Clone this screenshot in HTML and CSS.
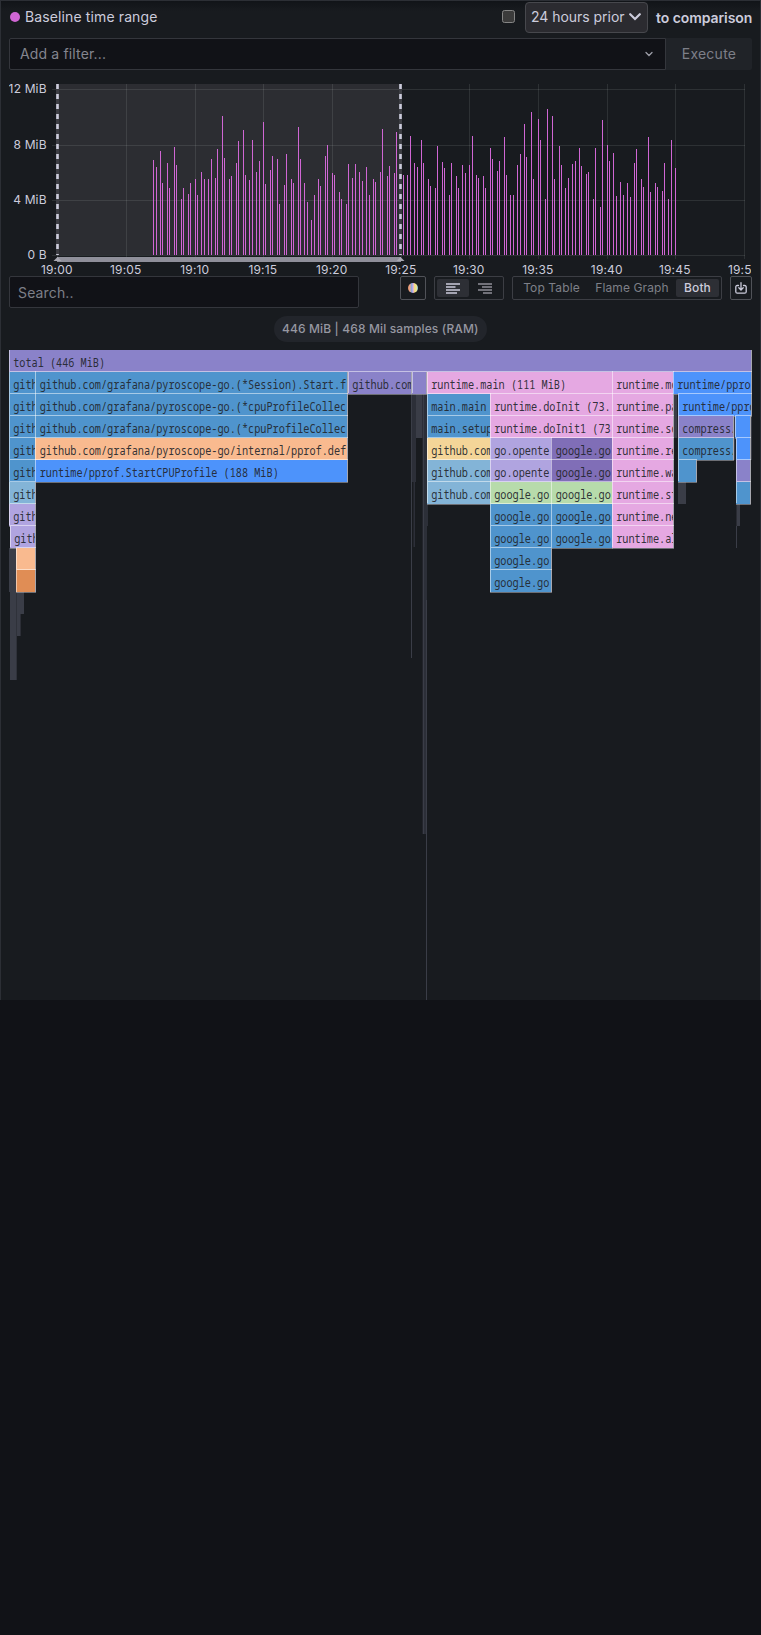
FILE: index.html
```html
<!DOCTYPE html>
<html lang="en">
<head>
<meta charset="utf-8">
<title>Comparison view</title>
<link rel="stylesheet" href="styles.css">
</head>
<body>
<section class="panel">
  <header class="panel-header">
    <span class="dot"></span>
    <span class="title">Baseline time range</span>
    <span class="checkbox"></span>
    <span class="select"><span class="select-label">24 hours prior</span>
      <svg width="12" height="8" viewBox="0 0 12 8"><path d="M1.2 1.2 6 6l4.800-4.800" fill="none" stroke="#ccccdc" stroke-width="2.200" stroke-linecap="round"/></svg>
    </span>
    <strong class="compare">to comparison</strong>
  </header>
  <div class="filter-row">
    <div class="filter"><span>Add a filter...</span>
      <svg width="8" height="6" viewBox="0 0 8 6"><path d="M1 1.500l3 3 3-3" fill="none" stroke="#9d9ea8" stroke-width="1.300" stroke-linecap="round"/></svg>
    </div>
    <div class="execute">Execute</div>
  </div>
  <svg class="timeline" id="timeline" width="742" height="206" viewBox="9 70 742 206"></svg>
  <div class="toolbar">
    <div class="search">Search..</div>
    <div class="tool color">
      <svg width="10" height="10" viewBox="0 0 10 10"><defs><linearGradient id="g"><stop offset="0" stop-color="#e8956a"/><stop offset=".2" stop-color="#e8a58a"/><stop offset=".38" stop-color="#79a8e8"/><stop offset=".52" stop-color="#e3a9df"/><stop offset=".66" stop-color="#f3e07a"/><stop offset=".85" stop-color="#e8e39a"/><stop offset="1" stop-color="#7bbce8"/></linearGradient></defs><circle cx="5" cy="5" r="5" fill="url(#g)"/></svg>
    </div>
    <div class="tool align">
      <span class="seg active"><svg width="14" height="11" viewBox="0 0 14 11"><path d="M0 1h14M0 4h9.500M0 7h14M0 10h11" stroke="#ccccdc" stroke-width="1.500"/></svg></span>
      <span class="seg"><svg width="14" height="11" viewBox="0 0 14 11"><path d="M0 1h14M4 4h10M0 7h14M5 10h9" stroke="#8e8f98" stroke-width="1.500"/></svg></span>
    </div>
    <div class="tool views"><span class="view v1">Top Table</span><span class="view v2">Flame Graph</span><span class="view v3 active">Both</span></div>
    <div class="tool download">
      <svg width="12" height="12" viewBox="0 0 12 12"><path d="M3.500 3.500H2.300Q.8 3.500.8 5v4.700q0 1.500 1.500 1.500h7.400q1.500 0 1.500-1.500V5q0-1.500-1.500-1.500H8.500M6 .7v7M3.800 5.800 6 8l2.200-2.200" fill="none" stroke="#ccccdc" stroke-width="1.300" stroke-linecap="round"/></svg>
    </div>
  </div>
  <div class="summary"><span class="pill">446 MiB | 468 Mil samples (RAM)</span></div>
  <svg class="flame" id="flame" width="743" height="650" viewBox="9 350 743 650"></svg>
</section>
<script>
(function () {
const NS = 'http://www.w3.org/2000/svg';
function add(parent, tag, attrs, text) {
  const el = document.createElementNS(NS, tag);
  for (const k in attrs) el.setAttribute(k, attrs[k]);
  if (text) el.textContent = text;
  parent.appendChild(el);
  return el;
}

// Timeline: memory samples as [x, top] pairs, in thirds of a pixel.
const samples = [];
const load = (offset, list) => list.split(';').forEach(p => {
  const [x, y] = p.split(',').map(Number);
  samples.push([Math.floor((x + offset) / 3), 75 + y / 3]);
});
load(0, '460,255;469,276;481,228;487,324;502,264;508,339;523,216;529,270;544,372;550,339;565,357;571,324;586,312;592,360;604,291;613,312;625,312;634,252;646,309;652,222;667,123;673,249;688,312;694,303;709,264;715,198;730,165;736,300;748,315');
load(750, '7,195;19,291;28,258;40,141;46,327;61,285;67,243;82,252;88,387;103,330;109,237;124,312;130,324;145,156;151,252;163,324;172,381;184,435;193,360;205,312;211,333;226,243;232,210;247,294;253,300;268,351;274,372;289,387;295,267;307,309;316,267;328,291;337,318;349,276;358,360;370,312;376,321;391,291;397,162;412,303;418,273;433,294;439,171;454,282;460,300;472,300;481,183;493,264;502,276;514,195;520,264;535,312;541,333;556,339;562,213;577,261;583,279;598,360;604,264;619,303;625,339;637,270;646,294;658,270;667,183;679,300;685,309;700,303;706,339;721,219;727,252;742,288;748,258');
load(1503, '10,186;16,300;28,360;37,360;49,270;58,237;70,147;76,246;91,111;97,312;112,132;118,195;133,372;139,102;154,123;160,312;175,213;181,270;193,339;202,309;214,267;223,258;235,219;241,273;256,297;262,291;277,372;283,219;298,396;304,135;319,210;325,258;337,234;346,363;358,321;367,360;379,324;388,366;400,264;406,222;421,312;427,336;442,186;448,351;463,324;469,336;484,348;490,264;502,372;511,195;523,279');

const tl = document.getElementById('timeline');
add(tl, 'rect', { x: 57, y: 84, width: 344, height: 171, fill: '#2c2d32' });
const grid = { fill: '#f0fafa', 'fill-opacity': .1 };
[89, 145, 200, 255].forEach((y, i) => {
  add(tl, 'rect', { x: 52, y, width: 693, height: 1, ...grid });
  add(tl, 'text', { x: 46.7, y: y + 4, 'text-anchor': 'end' }, ['12 MiB', '8 MiB', '4 MiB', '0 B'][i]);
});
[57, 126, 195, 263, 332, 401, 469, 538, 607, 675, 744].forEach((x, i) => {
  add(tl, 'rect', { x, y: 84, width: 1, height: 175, ...grid });
  const label = i === 10 ? '19:5' : '19:' + String(i * 5).padStart(2, '0');
  add(tl, 'text', i === 10 ? { x: 728, y: 274 } : { x: x - .2, y: 274, 'text-anchor': 'middle' }, label);
});
samples.forEach(([x, y]) => {
  add(tl, 'rect', { x, y, width: 1, height: 255 - y, fill: '#d066d4' });
});
[56, 399].forEach(x => {
  add(tl, 'rect', { x, y: 84, width: 3, height: 171, fill: '#3c3d43' });
  add(tl, 'path', { d: `M${x + 1.5} 84V255`, stroke: '#ccccdc', 'stroke-width': 2.6, 'stroke-dasharray': '5 5' });
});
add(tl, 'rect', { x: 57, y: 257, width: 344, height: 5, fill: '#8f8f9a' });
[57.5, 400.5].forEach(x => add(tl, 'path', { d: `M${x - 4} 261l4-4 4 4z`, fill: '#a9a9b3' }));

// Flame graph: [row, left, right, colour, label]
const C = {
  v: '#8a82c9', b: '#4f94cd', o: '#f9ba8f', d: '#e08d55', s: '#4d93fb', l: '#83b4d7',
  p: '#b0a4e0', k: '#e5a8e2', y: '#f4d598', g: '#b7dbab', u: '#806eb7', m: '#3a3d47', n: '#2c2f38'
};
const blocks = [
  [0, 9, 751, 'v', 'total (446 MiB)'],
  [1, 9, 35, 'b', 'gith'], [1, 35, 347, 'b', 'github.com/grafana/pyroscope-go.(*Session).Start.f'],
  [1, 348, 411, 'v', 'github.com'], [1, 412, 426, 'v'], [1, 427, 612, 'k', 'runtime.main (111 MiB)'],
  [1, 612, 673, 'k', 'runtime.mc'], [1, 673, 751, 's', 'runtime/ppro'],
  [2, 9, 35, 'b', 'gith'], [2, 35, 347, 'b', 'github.com/grafana/pyroscope-go.(*cpuProfileCollec'],
  [2, 427, 490, 'b', 'main.main'], [2, 490, 612, 'k', 'runtime.doInit (73.'], [2, 612, 673, 'k', 'runtime.pa'], [2, 678, 751, 's', 'runtime/ppro'],
  [3, 9, 35, 'b', 'gith'], [3, 35, 347, 'b', 'github.com/grafana/pyroscope-go.(*cpuProfileCollec'],
  [3, 427, 490, 'b', 'main.setup'], [3, 490, 612, 'k', 'runtime.doInit1 (73'], [3, 612, 673, 'k', 'runtime.sc'], [3, 678, 733, 'v', 'compress/'], [3, 735, 750, 's'],
  [4, 9, 35, 'b', 'gith'], [4, 35, 347, 'o', 'github.com/grafana/pyroscope-go/internal/pprof.def'],
  [4, 427, 490, 'y', 'github.com'], [4, 490, 551, 'p', 'go.opente'], [4, 551, 612, 'u', 'google.go'], [4, 612, 673, 'k', 'runtime.re'], [4, 678, 733, 'b', 'compress/'], [4, 736, 750, 's'],
  [5, 9, 35, 'b', 'gith'], [5, 35, 347, 's', 'runtime/pprof.StartCPUProfile (188 MiB)'],
  [5, 427, 490, 'l', 'github.com'], [5, 490, 551, 'p', 'go.opente'], [5, 551, 612, 'u', 'google.go'], [5, 612, 673, 'k', 'runtime.wa'], [5, 678, 696, 'b'], [5, 736, 750, 'v'],
  [6, 9, 35, 'l', 'gith'], [6, 427, 490, 'l', 'github.com'], [6, 490, 551, 'g', 'google.go'], [6, 551, 612, 'g', 'google.go'], [6, 612, 673, 'k', 'runtime.st'], [6, 736, 750, 'b'],
  [7, 9, 35, 'p', 'gith'], [8, 10, 35, 'p', 'gith'], [9, 16, 35, 'o'], [10, 16, 35, 'd'],
  [7, 490, 551, 'b', 'google.go'], [8, 490, 551, 'b', 'google.go'], [9, 490, 551, 'b', 'google.go'], [10, 490, 551, 'b', 'google.go'],
  [7, 551, 612, 'b', 'google.go'], [8, 551, 612, 'b', 'google.go'], [7, 612, 673, 'k', 'runtime.ne'], [8, 612, 673, 'k', 'runtime.al']
];
// Collapsed frames: [left, top, right, bottom, colour]
const muted = [
  [9, 548, 16.7, 592, 'm'], [10, 592, 16.7, 680, 'm'], [17, 592, 24, 614, 'm'], [17, 614, 20.6, 636, 'm'],
  [411, 394, 423, 438, 'n'], [416, 394, 422, 438, 'm'], [412, 438, 416, 482, 'n'], [413.5, 482, 415, 547, 'n'],
  [411, 394, 412, 658, 'm'], [422.5, 394, 427, 834, 'n'], [423, 394, 424, 834, 'm'], [426, 600, 427, 1000, 'm'], [427, 394, 428, 526, 'n'],
  [673, 394, 677.3, 438, 'm'], [733.5, 416, 735.3, 460, 'm'], [751, 416, 752, 460, 'm'],
  [678, 482, 686, 504, 'm'], [736.5, 504, 740, 526, 'm'], [736, 526, 737, 548, 'm']
];
const fg = document.getElementById('flame');
muted.forEach(([x, y, r, b, c]) => add(fg, 'rect', { x, y, width: r - x, height: b - y, fill: C[c] }));

// Bottom and right outlines go under the fills, so that neighbouring frames cover them.
const bounds = f => ({ x: f[1], y: 350 + f[0] * 22, w: f[2] - f[1] });
blocks.forEach(f => {
  const { x, y, w } = bounds(f);
  add(fg, 'rect', { x, y, width: w + 1, height: 22.6, fill: '#a6a7af' });
});
blocks.forEach(f => {
  const { x, y, w } = bounds(f);
  add(fg, 'rect', { x, y, width: w, height: 22, fill: C[f[3]] });
});
blocks.forEach(f => {
  const { x, y, w } = bounds(f);
  const line = { fill: '#ffffff', 'fill-opacity': .5 };
  add(fg, 'rect', { x, y, width: 1, height: f[0] === 10 ? 22 : 21, ...line });
  if (f[0]) add(fg, 'rect', { x, y: y - 1, width: w + 1, height: 1, ...line });
  if (f[4]) {
    const clip = add(fg, 'svg', { x, y, width: w, height: 22 });
    add(clip, 'text', { x: x === 35 || x === 551 ? 4.7 : 4.2, y: 17, textLength: f[4].length * 6.13, lengthAdjust: 'spacingAndGlyphs' }, f[4]);
  }
});
})();
</script>
</body>
</html>
```
FILE: styles.css
```css
* { box-sizing: border-box; }
body { margin: 0; background: #111217; color: #ccccdc; font: 14px Inter, sans-serif; }
.panel { height: 1000px; padding: 0 8px; background: #181b1f; border: 1px solid #2c2f35; border-bottom: 0; overflow: hidden; }
.panel-header { display: flex; align-items: center; height: 37px; padding-bottom: 5px; background: linear-gradient(#111418, #181b1f 10px); margin: 0 -8px; padding-left: 9px; padding-right: 8px; white-space: nowrap; }
.dot { width: 10px; height: 10px; border-radius: 50%; background: #d066d4; margin-right: 5px; }
.title { letter-spacing: .12px; flex: 1; padding-bottom: 1px; }
.checkbox { width: 13px; height: 13px; border: 1px solid #858585; border-radius: 2.500px; background: #3b3b3b; margin: -1px 10px 0 0; }
.select { width: 123px; height: 31px; display: flex; align-items: center; justify-content: space-between; padding: 0 6px 1px 5px; border: 1px solid #47484d; border-radius: 4px; background: #2b2b30; margin-right: 8px; }
.select-label { letter-spacing: -.03px; }
.compare { width: 96px; font-size: 14px; font-weight: 600; letter-spacing: -.07px; }
.filter-row { display: flex; height: 32px; }
.filter { width: 657px; height: 32px; display: flex; align-items: center; justify-content: space-between; border: 1px solid #34363c; border-radius: 2px 0 0 2px; background: #111217; color: #84858f; padding: 0 12px 1px 10px; letter-spacing: .15px; }
.execute { width: 86px; display: flex; align-items: center; justify-content: center; color: #7d7f88; background: #202328; border-radius: 0 2px 2px 0; letter-spacing: .25px; padding-bottom: 1px; }
.timeline { display: block; }
.timeline text { font: 12px Inter, sans-serif; fill: #ccccdc; letter-spacing: .15px; }
.toolbar { display: flex; height: 32px; width: 743px; }
.search { width: 350px; height: 32px; display: flex; align-items: center; border: 1px solid #34363c; border-radius: 2px; background: #111217; color: #7d7f88; padding-left: 8px; letter-spacing: .15px; margin-right: 41px; }
.tool { height: 24px; display: flex; align-items: center; justify-content: center; border: 1px solid #3c3e44; border-radius: 2px; }
.color { width: 26px; margin-right: 8px; border-color: #505258; }
.align { width: 70px; margin-right: 8px; }
.seg { display: flex; width: 32px; height: 18px; align-items: center; justify-content: center; border-radius: 2px; }
.active { background: #2d2f35; }
.views { width: 210px; margin-right: 8px; font-size: 12px; }
.view { height: 18px; line-height: 18px; text-align: center; color: #7e8088; letter-spacing: .12px; border-radius: 2px; }
.v1 { width: 73px; }
.v2 { width: 88px; }
.v3 { width: 43px; color: #ccccdc; font-weight: 500; }
.download { width: 22px; border-color: #505258; }
.summary { display: flex; justify-content: center; padding-top: 8px; height: 42px; }
.pill { height: 26px; line-height: 26px; padding: 0 8px; border-radius: 13px; background: #22252b; color: #9697a1; font-size: 12px; font-weight: 500; letter-spacing: .13px; width: 213px; white-space: nowrap; }
.flame { display: block; }
.flame text { font: 13px "Noto Sans Mono", "DejaVu Sans Mono", monospace; fill: #22252b; fill-opacity: .92; }
```
